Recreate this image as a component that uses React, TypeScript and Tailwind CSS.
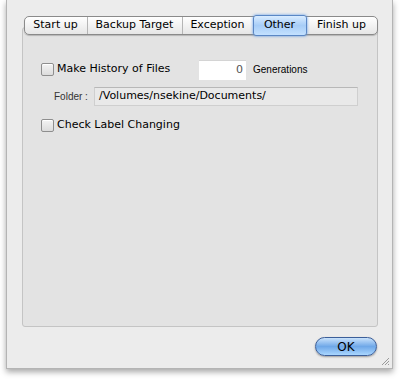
const font = { fontFamily: '"DejaVu Sans", "Liberation Sans", sans-serif' };
const small = { fontFamily: '"Liberation Sans", Arial, sans-serif' };

const tabs = [
  { label: "Start up", w: "w-[63px]" },
  { label: "Backup Target", w: "w-[95px]" },
  { label: "Exception", w: "w-[70px]" },
  { label: "Other", w: "w-[54px]", active: true },
  { label: "Finish up", w: "w-[70px]" },
];

function Checkbox() {
  return (
    <span className="w-[13px] h-[13px] shrink-0 rounded-[2px] border border-[#8e8e8e] bg-gradient-to-b from-[#f4f4f4] to-[#dcdcdc] shadow-[inset_0_1px_0_#fff]" />
  );
}

export default function App() {
  return (
    <div className="w-[400px] h-[380px] bg-white overflow-hidden" style={font}>
      {/* Window */}
      <div className="ml-[6px] w-[387px] h-[369px] bg-[#ececec] border-l border-r border-b border-[#b4b4b4] shadow-[0_3px_6px_rgba(0,0,0,0.35)] flex flex-col">
        <div className="ml-[15px] mt-[16px] w-[357px] flex flex-col">
          {/* Tabs */}
          <div className="flex justify-center relative z-10 -mb-[8px]">
            <div className="flex h-[19px] rounded-[5px] border border-[#8a8a8a] bg-gradient-to-b from-white to-[#e6e6e6] shadow-[0_1px_1px_rgba(0,0,0,0.2)]">
              {tabs.map((t, i) =>
                t.active ? (
                  <div
                    key={t.label}
                    className={`${t.w} -my-[2px] flex items-center justify-center text-[11px] text-black rounded-[3px] border border-[#5a87c5] bg-gradient-to-b from-[#d9ecff] via-[#a7cdf7] to-[#c3e1ff] shadow-[0_0_3px_#5b9ae8]`}
                  >
                    {t.label}
                  </div>
                ) : (
                  <div
                    key={t.label}
                    className={`${t.w} flex items-center justify-center text-[11px] text-black ${
                      i < tabs.length - 1 && !tabs[i + 1].active ? "border-r border-[#b5b5b5]" : ""
                    }`}
                  >
                    {t.label}
                  </div>
                )
              )}
            </div>
          </div>

          {/* Panel */}
          <div className="w-[356px] h-[300px] rounded-[3px] border border-[#c4c4c4] bg-[#e3e3e3] flex flex-col pt-[31px] pl-[18px]">
            <div className="flex items-center h-[21px]">
              <Checkbox />
              <span className="ml-[3px] w-[142px] text-[11px] text-black">Make History of Files</span>
              <div className="w-[47px] h-[20px] bg-white border-t border-[#d4d4d4] flex items-center justify-end pr-[3px] text-[11px] text-[#555]">
                0
              </div>
              <span className="ml-[7px] text-[10px] text-black" style={small}>Generations</span>
            </div>

            <div className="flex items-center mt-[7px] h-[19px]">
              <span className="ml-[13px] w-[40px] text-[10px] text-[#333]" style={small}>Folder :</span>
              <div className="w-[264px] h-[19px] bg-[#e9e9e9] border border-[#cfcfcf] border-t-[#b8b8b8] flex items-center pl-[4px] text-[11px] text-black">
                /Volumes/nsekine/Documents/
              </div>
            </div>

            <div className="flex items-center mt-[10px] h-[19px]">
              <Checkbox />
              <span className="ml-[3px] text-[11px] text-black">Check Label Changing</span>
            </div>
          </div>
        </div>

        {/* Footer */}
        <div className="flex justify-end items-end mt-[10px] pr-[15px]">
          <button className="w-[62px] h-[19px] rounded-full border border-[#3c5f9a] bg-gradient-to-b from-[#c9e2fb] via-[#6fa8e8] to-[#a9d6ff] text-[12px] text-black flex items-center justify-center shadow-[0_1px_2px_rgba(0,0,0,0.35)]">
            OK
          </button>
        </div>

        <div className="flex-1 flex justify-end items-end pr-[2px] pb-[2px]">
          <svg width="10" height="10" viewBox="0 0 10 10">
            <path d="M9 2 L2 9 M9 5 L5 9 M9 8 L8 9" stroke="#9a9a9a" strokeWidth="1" />
          </svg>
        </div>
      </div>
    </div>
  );
}
